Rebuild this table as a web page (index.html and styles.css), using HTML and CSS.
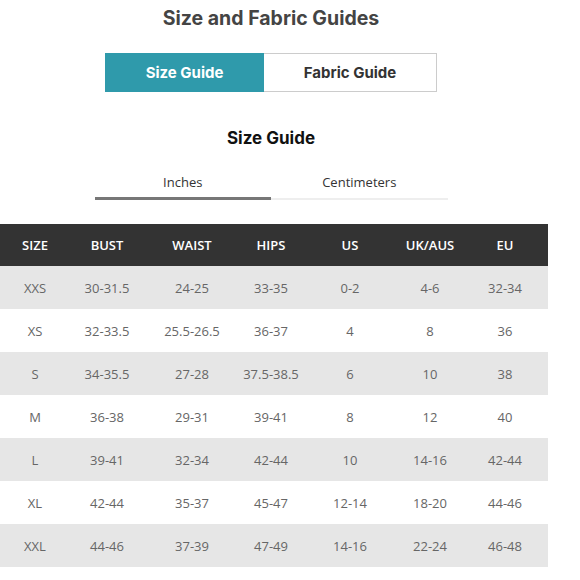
FILE: index.html
```html
<!DOCTYPE html>
<html>
<head>
<meta charset="utf-8">
<link rel="stylesheet" href="styles.css">
</head>
<body>
<div class="page">
  <div class="top">
    <h1 class="title">Size and Fabric Guides</h1>
    <div class="toggle">
      <div class="toggle-btn active">Size Guide</div>
      <div class="toggle-btn">Fabric Guide</div>
    </div>
    <h2 class="subtitle">Size Guide</h2>
    <div class="tabs">
      <div class="tab active">Inches</div>
      <div class="tab">Centimeters</div>
    </div>
  </div>
  <table class="sizes">
    <colgroup>
      <col class="c1"><col class="c2"><col class="c3"><col class="c4"><col class="c5"><col class="c6"><col class="c7">
    </colgroup>
    <thead>
      <tr><th>SIZE</th><th>BUST</th><th>WAIST</th><th>HIPS</th><th>US</th><th>UK/AUS</th><th>EU</th></tr>
    </thead>
    <tbody>
      <tr><td>XXS</td><td>30-31.5</td><td>24-25</td><td>33-35</td><td>0-2</td><td>4-6</td><td>32-34</td></tr>
      <tr><td>XS</td><td>32-33.5</td><td>25.5-26.5</td><td>36-37</td><td>4</td><td>8</td><td>36</td></tr>
      <tr><td>S</td><td>34-35.5</td><td>27-28</td><td>37.5-38.5</td><td>6</td><td>10</td><td>38</td></tr>
      <tr><td>M</td><td>36-38</td><td>29-31</td><td>39-41</td><td>8</td><td>12</td><td>40</td></tr>
      <tr><td>L</td><td>39-41</td><td>32-34</td><td>42-44</td><td>10</td><td>14-16</td><td>42-44</td></tr>
      <tr><td>XL</td><td>42-44</td><td>35-37</td><td>45-47</td><td>12-14</td><td>18-20</td><td>44-46</td></tr>
      <tr><td>XXL</td><td>44-46</td><td>37-39</td><td>47-49</td><td>14-16</td><td>22-24</td><td>46-48</td></tr>
    </tbody>
  </table>
</div>
</body>
</html>
```
FILE: styles.css
```css
html, body {
  margin: 0;
  padding: 0;
  background: #ffffff;
}
.page {
  width: 548px;
  font-family: "Open Sans", "Liberation Sans", sans-serif;
}
.top {
  width: 542px;
  display: flex;
  flex-direction: column;
  align-items: center;
}
.title {
  margin: 6px 0 0;
  font-family: Inter, "DejaVu Sans", sans-serif;
  font-weight: 700;
  font-size: 19.5px;
  line-height: 24px;
  color: #444444;
}
.toggle {
  margin-top: 23px;
  width: 332px;
  height: 39px;
  display: flex;
  box-sizing: border-box;
  border: 1px solid #cccccc;
}
.toggle-btn {
  flex: 1;
  display: flex;
  align-items: center;
  justify-content: center;
  font-family: Inter, "DejaVu Sans", sans-serif;
  font-weight: 700;
  font-size: 15px;
  color: #333333;
}
.toggle-btn.active {
  flex: 0 0 159px;
  background: #2f9aab;
  color: #ffffff;
  margin: -1px 0 -1px -1px;
}
.subtitle {
  margin: 34px 0 0;
  font-family: Inter, "DejaVu Sans", sans-serif;
  font-weight: 700;
  font-size: 17px;
  line-height: 24px;
  color: #111111;
}
.tabs {
  margin-top: 22px;
  width: 353px;
  display: flex;
}
.tab {
  flex: 1;
  text-align: center;
  font-size: 13px;
  line-height: 20px;
  color: #333333;
  padding-bottom: 6px;
  border-bottom: 2px solid #eeeeee;
}
.tab.active {
  border-bottom: 3px solid #777777;
  padding-bottom: 5px;
}
.sizes {
  margin-top: 24px;
  width: 548px;
  border-collapse: collapse;
  table-layout: fixed;
}
.c1 { width: 70px; }
.c2 { width: 74px; }
.c3 { width: 96px; }
.c4 { width: 62px; }
.c5 { width: 96px; }
.c6 { width: 64px; }
.c7 { width: 86px; }
.sizes th {
  background: #333333;
  color: #ffffff;
  font-weight: 600;
  font-size: 13px;
  height: 42px;
  padding: 0;
  text-align: center;
}
.sizes td {
  height: 43px;
  padding: 0;
  text-align: center;
  font-size: 13px;
  color: #666666;
}
.sizes tbody tr:nth-child(odd) td {
  background: #e6e6e6;
}
```
